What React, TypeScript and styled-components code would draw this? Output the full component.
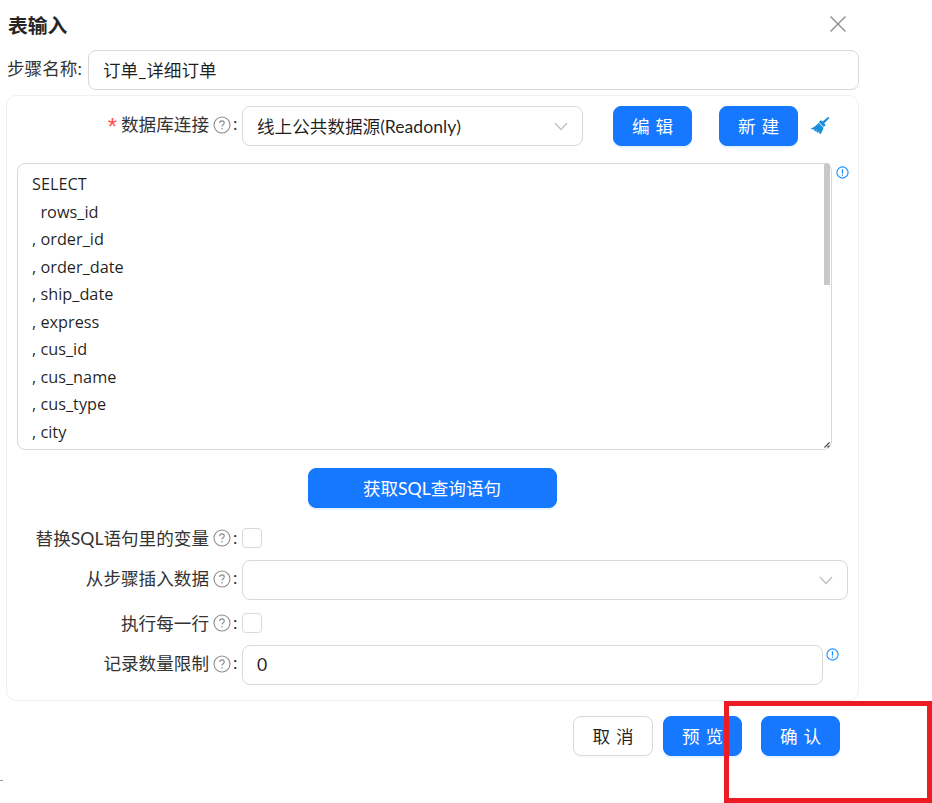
import React from "react";
import styled, {createGlobalStyle} from "styled-components";

const FONT = `Lato, "Noto Sans CJK SC", sans-serif`;
const CODE_FONT = `"Open Sans", "Noto Sans CJK SC", sans-serif`;

const sqlText = [
	"SELECT",
	"  rows_id",
	", order_id",
	", order_date",
	", ship_date",
	", express",
	", cus_id",
	", cus_name",
	", cus_type",
	", city",
	", province",
	", area",
	", product_id",
	", product_type",
	", product_subtype",
	", product_name",
	", sales",
	", amount",
	", discount",
	", profit",
	", create_time",
	", update_time",
	"FROM",
	"  order_detail",
].join("\n");

const GlobalStyle = createGlobalStyle`
	html, body {
		margin: 0;
		padding: 0;
		background: #fff;
	}
	body {
		font-family: ${FONT};
		color: rgba(0, 0, 0, 0.88);
	}
	* {
		box-sizing: border-box;
	}
`;

const Page = styled.div`
	position: relative;
	width: 932px;
	height: 803px;
	overflow: hidden;
	background: #fff;
`;

const Dialog = styled.div`
	width: 859px;
	padding-left: 6px;
`;

const Header = styled.div`
	display: flex;
	align-items: center;
	justify-content: space-between;
	height: 50px;
	padding: 0 12px 2px 2px;
`;

const Title = styled.h2`
	margin: 0;
	font-size: 19.8px;
	font-weight: 700;
	color: #262626;
`;

const CloseIcon = styled.svg`
	width: 18px;
	height: 18px;
	stroke: #8c8c8c;
	stroke-width: 1.4;
	fill: none;
`;

const StepRow = styled.div`
	display: flex;
	align-items: center;
	height: 40px;
`;

const StepLabel = styled.label`
	width: 82px;
	padding: 0 0 5px 1px;
	font-size: 17.6px;
	white-space: nowrap;
	color: #333;
`;

const Field = styled.div<{$width?: number}>`
	display: flex;
	align-items: center;
	justify-content: space-between;
	flex: ${(p) => (p.$width ? "none" : "1")};
	width: ${(p) => (p.$width ? `${p.$width}px` : "auto")};
	height: 40px;
	padding: 0 14px 2px;
	border: 1px solid #d9d9d9;
	border-radius: 8px;
	background: #fff;
	font-size: 17.6px;
	color: rgba(0, 0, 0, 0.88);
`;

const Chevron = styled.svg`
	width: 14px;
	height: 14px;
	margin-top: 2px;
	stroke: #bfbfbf;
	stroke-width: 1.2;
	fill: none;
`;

const Panel = styled.div`
	display: flex;
	flex-direction: column;
	height: 606px;
	margin-top: 5px;
	padding: 10px 10px 0 0;
	border: 1px solid #f0f0f0;
	border-radius: 10px;
`;

const FormRow = styled.div<{$top?: number; $height?: number}>`
	display: flex;
	align-items: center;
	height: ${(p) => p.$height ?? 40}px;
	margin-top: ${(p) => p.$top ?? 0}px;
`;

const Label = styled.label<{$raise?: number}>`
	display: flex;
	align-items: center;
	justify-content: flex-end;
	flex: none;
	width: 235px;
	padding: 0 4px ${(p) => p.$raise ?? 3}px 0;
	font-size: 17.6px;
	white-space: nowrap;
	color: #333;
`;

const LabelText = styled.span`
	margin-top: -2px;
`;

const Required = styled.span`
	margin: 4px 4px 0 0;
	font-family: "Liberation Sans", sans-serif;
	font-size: 24px;
	line-height: 1;
	color: #ff4d4f;
`;

const HelpIcon = styled.svg`
	width: 18px;
	height: 18px;
	margin: 0 2.5px 0 3.5px;
	stroke: #8c8c8c;
	fill: none;
`;

const Colon = styled.span`
	width: 5px;
	margin-top: -2px;
`;

const Button = styled.button<{$primary?: boolean; $width?: number; $spaced?: boolean; $left?: number}>`
	flex: none;
	width: ${(p) => p.$width ?? 79}px;
	height: 40px;
	margin-left: ${(p) => p.$left ?? 0}px;
	padding: 0 0 2px;
	border: 1px solid ${(p) => (p.$primary ? "#1677ff" : "#d9d9d9")};
	border-radius: 8px;
	background: ${(p) => (p.$primary ? "#1677ff" : "#fff")};
	box-shadow: 0 2px 0 ${(p) => (p.$primary ? "rgba(5, 145, 255, 0.1)" : "rgba(0, 0, 0, 0.02)")};
	font-family: ${FONT};
	font-size: 17.6px;
	letter-spacing: ${(p) => (p.$spaced ? "0.34em" : "0")};
	text-indent: ${(p) => (p.$spaced ? "0.34em" : "0")};
	color: ${(p) => (p.$primary ? "#fff" : "rgba(0, 0, 0, 0.88)")};
`;

const BroomIcon = styled.svg`
	flex: none;
	width: 20px;
	height: 20px;
	margin-left: 12px;
`;

const SqlWrap = styled.div`
	display: flex;
	align-items: flex-start;
	margin: 17px 0 0 10px;
`;

const SqlFrame = styled.div`
	position: relative;
	flex: none;
	width: 815px;
	height: 287px;
`;

const SqlBox = styled.textarea`
	display: block;
	width: 100%;
	height: 100%;
	margin: 0;
	padding: 7px 14px 0 14px;
	border: 1px solid #d9d9d9;
	border-radius: 8px;
	outline: none;
	font-family: ${CODE_FONT};
	font-size: 16.3px;
	line-height: 27.5px;
	color: rgba(0, 0, 0, 0.88);
	white-space: pre;
	overflow: hidden;
	resize: none;
`;

const ScrollThumb = styled.span`
	position: absolute;
	top: 0;
	right: 2px;
	width: 6px;
	height: 122px;
	border-radius: 3px 3px 0 0;
	background: #c8c8c8;
`;

const ResizeGrip = styled.svg`
	position: absolute;
	right: 2px;
	bottom: 2px;
	width: 6px;
	height: 6px;
	stroke: #444;
	stroke-width: 1.1;
	fill: none;
`;

const InfoIcon = styled.svg<{$top?: number; $left?: number}>`
	flex: none;
	width: 13px;
	height: 13px;
	margin: ${(p) => p.$top ?? 3}px 0 0 ${(p) => p.$left ?? 4}px;
	stroke: #1890ff;
	fill: none;
`;

const CenterRow = styled.div`
	display: flex;
	justify-content: center;
	margin-top: 18px;
	padding-left: 9px;
`;

const Checkbox = styled.span`
	display: block;
	width: 20px;
	height: 20px;
	border: 1px solid #d9d9d9;
	border-radius: 4px;
	background: #fff;
`;

const Footer = styled.div`
	display: flex;
	justify-content: flex-end;
	gap: 10px;
	margin-top: 15px;
	padding-right: 19px;
`;

const Annotation = styled.div`
	position: absolute;
	left: 724px;
	top: 701px;
	width: 208px;
	height: 102px;
	border: 5px solid #ec1c24;
	pointer-events: none;
`;

const Speck = styled.span`
	position: absolute;
	left: 0;
	top: 780px;
	width: 3px;
	height: 1px;
	background: #9a9a9a;
`;

const Help = () => (
	<HelpIcon viewBox="0 0 18 18">
		<circle cx="9" cy="9" r="8" strokeWidth="1.1" />
		<path d="M6.7 7.1c0-1.3 1-2.2 2.3-2.2s2.3.9 2.3 2.1c0 1.7-2.3 1.7-2.3 3.5" strokeWidth="1.1" />
		<path d="M9 12.1v1.3" strokeWidth="1.2" />
	</HelpIcon>
);

const Info = ({top, left}: {top?: number; left?: number}) => (
	<InfoIcon viewBox="0 0 13 13" $top={top} $left={left}>
		<circle cx="6.5" cy="6.5" r="5.6" strokeWidth="1.1" />
		<path d="M6.5 3.2v4.2M6.5 8.6v1.1" strokeWidth="1.3" />
	</InfoIcon>
);

const Arrow = () => (
	<Chevron viewBox="0 0 14 14">
		<path d="M1 4l6 6.5L13 4" />
	</Chevron>
);

const App = () => {
	return (
		<>
			<GlobalStyle />
			<Page>
				<Dialog>
					<Header>
						<Title>表输入</Title>
						<CloseIcon viewBox="0 0 18 18">
							<path d="M1.5 1.5l15 15M16.5 1.5l-15 15" />
						</CloseIcon>
					</Header>
					<StepRow>
						<StepLabel>步骤名称:</StepLabel>
						<Field>订单_详细订单</Field>
					</StepRow>
					<Panel>
						<FormRow>
							<Label>
								<Required>*</Required>
								<LabelText>数据库连接</LabelText>
								<Help />
								<Colon>:</Colon>
							</Label>
							<Field $width={341}>
								线上公共数据源(Readonly)
								<Arrow />
							</Field>
							<Button $primary $spaced $left={30}>编辑</Button>
							<Button $primary $spaced $left={27}>新建</Button>
							<BroomIcon viewBox="0 0 20 20">
								<path
									fill="#1c8fdc"
									d="M18.4.8l1 1.1-5.200 5.500 1 1.100c.4.4.3.9-.1 1.200l-1.400 1.300-4.900-5 1.300-1.300c.4-.4.9-.4 1.300-.1l1.100 1zM8.600 6.800l4.900 5c-.3 1.800-1.500 4.400-3 6.200l-1.700-.9.6-1.800-1.700 1.400-1.500-.9.8-1.600-1.700 1.100-1.400-.9.9-1.400-1.800.8L.6 12.600c3-.9 5.900-3.200 8-5.800z"
								/>
							</BroomIcon>
						</FormRow>
						<SqlWrap>
							<SqlFrame>
								<SqlBox readOnly defaultValue={sqlText} />
								<ScrollThumb />
								<ResizeGrip viewBox="0 0 6 6">
									<path d="M.5 5.500L5.500.5M3.500 5.500l2-2" />
								</ResizeGrip>
							</SqlFrame>
							<Info />
						</SqlWrap>
						<CenterRow>
							<Button $primary $width={249}>获取SQL查询语句</Button>
						</CenterRow>
						<FormRow $top={20} $height={20}>
							<Label $raise={0}>
								<LabelText>替换SQL语句里的变量</LabelText>
								<Help />
								<Colon>:</Colon>
							</Label>
							<Checkbox />
						</FormRow>
						<FormRow $top={12}>
							<Label>
								<LabelText>从步骤插入数据</LabelText>
								<Help />
								<Colon>:</Colon>
							</Label>
							<Field $width={606}>
								<span />
								<Arrow />
							</Field>
						</FormRow>
						<FormRow $top={13} $height={20}>
							<Label $raise={0}>
								<LabelText>执行每一行</LabelText>
								<Help />
								<Colon>:</Colon>
							</Label>
							<Checkbox />
						</FormRow>
						<FormRow $top={12}>
							<Label>
								<LabelText>记录数量限制</LabelText>
								<Help />
								<Colon>:</Colon>
							</Label>
							<Field $width={581}>0</Field>
							<Info top={-21} left={3} />
						</FormRow>
					</Panel>
					<Footer>
						<Button $spaced $width={80}>取消</Button>
						<Button $primary $spaced>预览</Button>
						<Button $primary $spaced $left={9}>确认</Button>
					</Footer>
				</Dialog>
				<Annotation />
				<Speck />
			</Page>
		</>
	);
};

export default App;
